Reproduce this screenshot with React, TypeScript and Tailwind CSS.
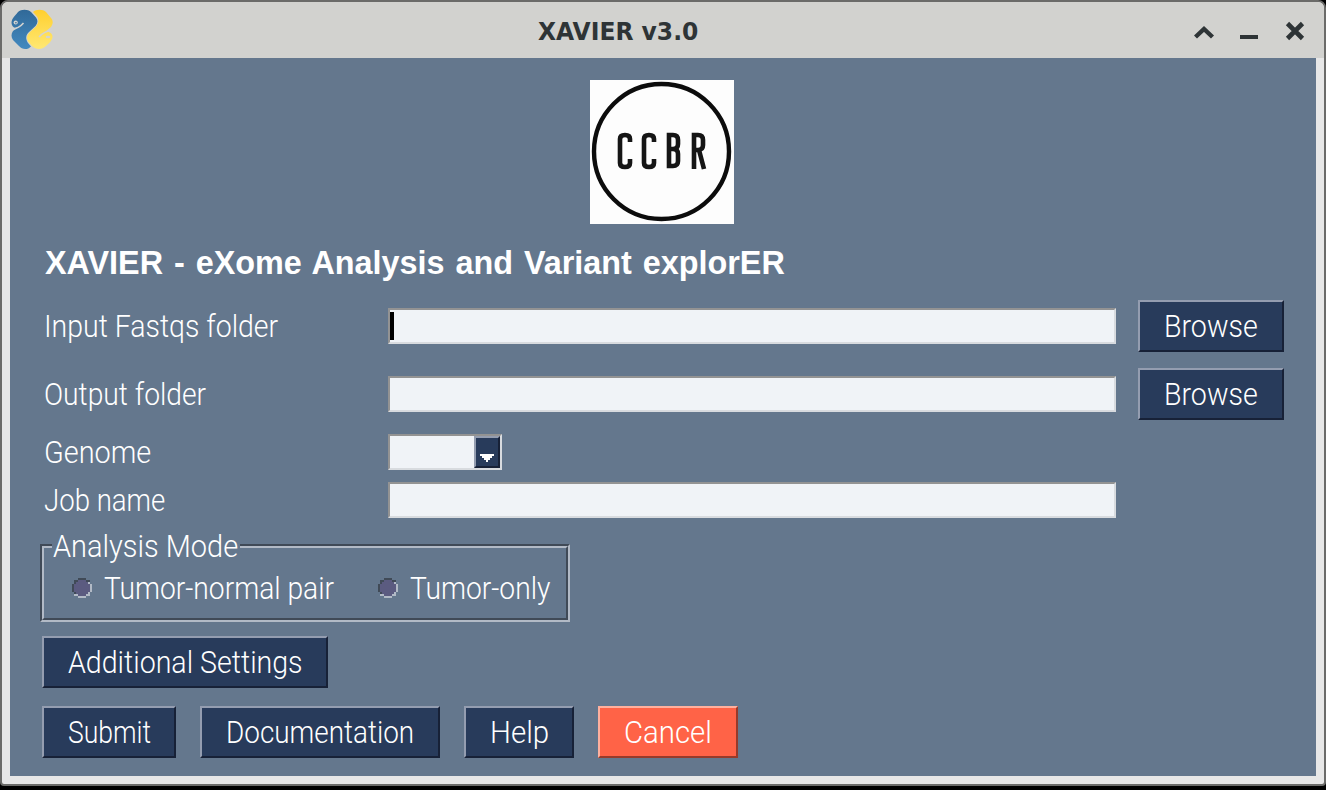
import { useLayoutEffect, useRef, useState } from "react";

const raised =
  "flex h-[52px] shrink-0 items-center justify-center border-2 border-t-[#949db0] border-l-[#949db0] border-r-[#172137] border-b-[#172137] bg-[#283b5b] pt-[2px]";
const field =
  "h-9 border-2 border-t-[#939393] border-l-[#939393] border-r-[#d8dbdf] border-b-[#d8dbdf] bg-[#f0f3f7]";
const caption = "w-[346px] pl-[2px] pt-[2px]";

/* Text fitted horizontally to a fixed advance width. */
function Fit({ text, width, className = "" }: { text: string; width: number; className?: string }) {
  const ref = useRef<HTMLSpanElement>(null);
  const [scale, setScale] = useState(1);
  useLayoutEffect(() => {
    if (ref.current) setScale(width / ref.current.offsetWidth);
  }, [width]);
  return (
    <span className="block shrink-0" style={{ width }}>
      <span
        ref={ref}
        className={`inline-block origin-left whitespace-pre ${className}`}
        style={{ transform: `scaleX(${scale})` }}
      >
        {text}
      </span>
    </span>
  );
}

function Button({ text, width, box }: { text: string; width: number; box: string }) {
  return (
    <button className={`${raised} ${box}`}>
      <Fit text={text} width={width} />
    </button>
  );
}

function Radio({ text, width }: { text: string; width: number }) {
  return (
    <label className="flex items-center gap-3">
      <svg width="20" height="20" viewBox="0 0 10 10" shapeRendering="crispEdges">
        <path d="M3 0H7V1H9V3H10V7H9V9H7V10H3V9H1V7H0V3H1V1H3Z" fill="#b2bac6" />
        <path d="M3 0H7V1H9V2H2V8H1V7H0V3H1V1H3Z" fill="#404a57" />
        <path d="M3 1H7V2H8V3H9V7H8V8H7V9H3V8H2V7H1V3H2V2H3Z" fill="#5b5b80" />
      </svg>
      <span className="pt-[2px]">
        <Fit text={text} width={width} />
      </span>
    </label>
  );
}

function PythonLogo() {
  return (
    <svg width="42" height="42" viewBox="0 0 42 42">
      <defs>
        <linearGradient id="blue" x2="0" y2="1">
          <stop stopColor="#306998" />
          <stop offset="1" stopColor="#4389bf" />
        </linearGradient>
        <linearGradient id="yellow" x2="0" y2="1">
          <stop stopColor="#ffcf2e" />
          <stop offset="1" stopColor="#ffe873" />
        </linearGradient>
      </defs>
      <path
        d="M22 3C25 0 32 0 35 3L40 9C42.500 12 42 15 40 18L34 23C37 22 42 24 41.500 28C41 32 38 34 35 37C31 41 25 41 21 37L17.500 33C15 29 16 26 19 23L25 17.500C28 14 28 10 25.500 7Z"
        fill="url(#yellow)"
      />
      <path
        d="M7 3C10 0 17 0 20 3L25 8.500C27 11 27 14 24.500 17L18 23C14.500 26 14.500 30 17 34L20 37.500C17 41 11 41 8 37L2 31C0 28 0 25 2 22L8.500 17C5 20 1 19 .5 14C.5 9 4 7 7 3Z"
        fill="url(#blue)"
      />
      <circle cx="4.700" cy="13.500" r="2.100" fill="#d3d3d0" />
      <circle cx="4.900" cy="13.700" r=".8" fill="#306998" />
      <ellipse cx="37" cy="28" rx="2.300" ry="1.300" fill="#d3d3d0" />
      <path d="M0 20.500Q8 19.500 12.500 14M41.500 21.500Q33 22 28 28" fill="none" stroke="#d3d3d0" strokeWidth="1.500" />
    </svg>
  );
}

export default function App() {
  return (
    <div className="h-[790px] w-[1326px] overflow-hidden bg-black font-[Roboto,sans-serif] text-[31px] font-light leading-9 text-white">
      <div className="flex h-[786px] flex-col rounded-t-[8px] rounded-bl-[4px] rounded-br-[4px] border-2 border-[#6b6b69] bg-[#e7e7e7]">
        <header className="flex h-14 shrink-0 items-center rounded-t-[6px] bg-[#d2d2cf] pl-[9px] pr-[18px] text-[#2e3436]">
          <PythonLogo />
          <h1 className="ml-[485px] pt-[3px] font-['DejaVu_Sans',sans-serif] text-[24px] font-bold">
            <Fit text="XAVIER v3.0" width={160} />
          </h1>
          <svg className="ml-auto mt-px" width="112" height="20" viewBox="0 0 112 20" fill="none" stroke="#2e3436">
            <path d="M1.500 16L10 8L18.500 16" strokeWidth="4.400" />
            <path d="M46 16h18" strokeWidth="4" />
            <path d="M93.500 2.500L108.500 17.500M108.500 2.500L93.500 17.500" strokeWidth="4.600" />
          </svg>
        </header>
        <main className="mx-2 flex h-[718px] shrink-0 flex-col bg-[#64778d] pl-8 pt-[22px]">
          <svg className="ml-[548px] block shrink-0" width="144" height="144" viewBox="0 0 144 144">
            <path d="M0 0h144v144H0z" fill="#fdfdfd" />
            <circle cx="71.500" cy="71.500" r="67.500" fill="none" stroke="#0c0c0c" strokeWidth="4.400" />
            <g fill="none" stroke="#151515" strokeWidth="4.600">
              <path d="M40 62v-3q0-4-5-4t-5 4v24q0 4 5 4t5-4v-4" />
              <path d="M64 62v-3q0-4-5-4t-5 4v24q0 4 5 4t5-4v-4" />
              <path d="M79 55h4q5 0 5 5v4q0 5-5 5h-4h4q5 0 5 5v7q0 5-5 5h-4z" />
              <path d="M104 89V55h4q5 0 5 5v5q0 5-5 5h-4m5 0l5 19" />
            </g>
          </svg>
          <h2 className="ml-[3px] mt-[21px] h-9 shrink-0 font-['Liberation_Sans',sans-serif] text-[33px] font-bold">
            <Fit text="XAVIER - eXome Analysis and Variant explorER" width={740} className="[word-spacing:2px]" />
          </h2>
          <div className="mt-[19px] flex h-[52px] shrink-0 items-center">
            <div className={caption}><Fit text="Input Fastqs folder" width={234} /></div>
            <div className={`${field} mr-[22px] w-[728px]`}>
              <div className="mt-[2px] h-7 w-1 bg-black" />
            </div>
            <Button text="Browse" width={94} box="w-[146px]" />
          </div>
          <div className="mt-4 flex h-[52px] shrink-0 items-center">
            <div className={caption}><Fit text="Output folder" width={162} /></div>
            <div className={`${field} mr-[22px] w-[728px]`} />
            <Button text="Browse" width={94} box="w-[146px]" />
          </div>
          <div className="mt-[14px] flex h-9 shrink-0 items-center">
            <div className={caption}><Fit text="Genome" width={107} /></div>
            <div className={`${field} flex w-[114px] justify-end`}>
              <div className="flex h-8 w-[26px] justify-center border-2 border-t-[#949db0] border-l-[#949db0] border-r-[#172137] border-b-[#172137] bg-[#283b5b] pt-4">
                <svg width="14" height="8" viewBox="0 0 7 4" shapeRendering="crispEdges">
                  <path d="M0 0h7v1h-1v1h-1v1h-1v1h-1v-1h-1v-1h-1v-1h-1z" fill="white" />
                </svg>
              </div>
            </div>
          </div>
          <div className="mt-3 flex h-9 shrink-0 items-center">
            <div className={caption}><Fit text="Job name" width={121} /></div>
            <div className={`${field} w-[728px]`} />
          </div>
          <div className="relative -ml-[2px] mt-[26px] h-[78px] w-[530px] shrink-0 border-2 border-b-[#b2bac6] border-l-[#404a57] border-r-[#b2bac6] border-t-[#404a57]">
            <div className="flex h-[74px] items-center gap-11 border-2 border-b-[#404a57] border-l-[#b2bac6] border-r-[#404a57] border-t-[#b2bac6] pl-7 pt-[10px]">
              <Radio text="Tumor-normal pair" width={230} />
              <Radio text="Tumor-only" width={140} />
            </div>
            <div className="absolute -top-[17px] left-[10px] bg-[#64778d] pl-px pr-[2px]">
              <Fit text="Analysis Mode" width={185} />
            </div>
          </div>
          <div className="mt-[14px] flex">
            <Button text="Additional Settings" width={235} box="w-[286px]" />
          </div>
          <div className="mt-[18px] flex gap-6">
            <Button text="Submit" width={83} box="w-[134px]" />
            <Button text="Documentation" width={188} box="w-[240px]" />
            <Button text="Help" width={59} box="w-[110px]" />
            <button className="flex h-[52px] w-[140px] items-center justify-center border-2 border-b-[#973a2a] border-l-[#ffb09e] border-r-[#973a2a] border-t-[#ffb09e] bg-[#ff6347] pt-[2px]">
              <Fit text="Cancel" width={88} />
            </button>
          </div>
        </main>
      </div>
    </div>
  );
}
